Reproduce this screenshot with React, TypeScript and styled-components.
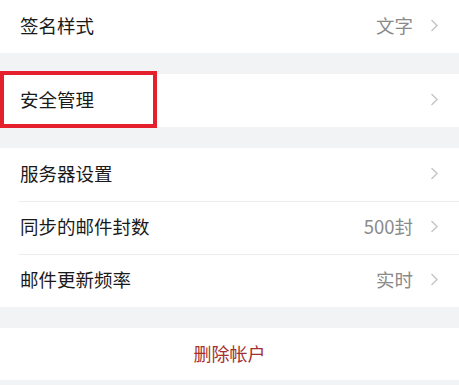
import styled, { createGlobalStyle } from "styled-components";

const GlobalStyle = createGlobalStyle`
  html, body {
    margin: 0;
    padding: 0;
    background: #f2f3f5;
    font-family: "Noto Sans CJK SC", "Noto Sans", sans-serif;
  }
`;

type Item = { label: string; value?: string };

const groups: Item[][] = [
  [{ label: "签名样式", value: "文字" }],
  [{ label: "安全管理" }],
  [
    { label: "服务器设置" },
    { label: "同步的邮件封数", value: "500封" },
    { label: "邮件更新频率", value: "实时" },
  ],
];

const Chevron = () => (
  <svg width="9" height="13" viewBox="0 0 9 13">
    <polyline
      points="1.5,1 7,6.5 1.5,12"
      fill="none"
      stroke="#c4c4c6"
      strokeWidth="1.4"
    />
  </svg>
);

const App = () => {
  return (
    <>
      <GlobalStyle />
      <Page>
        {groups.map((group, gi) => (
          <Group key={gi}>
            {group.map((item, i) => (
              <Row key={item.label} divided={i > 0}>
                <Label>{item.label}</Label>
                <Right>
                  {item.value && <Value>{item.value}</Value>}
                  <Chevron />
                </Right>
              </Row>
            ))}
            {gi === 1 && <Highlight />}
          </Group>
        ))}
        <Group>
          <DeleteRow>删除帐户</DeleteRow>
        </Group>
      </Page>
    </>
  );
};

export default App;

const Page = styled.div`
  display: flex;
  flex-direction: column;
  gap: 21px;
  padding-bottom: 6px;
`;

const Group = styled.div`
  position: relative;
  background: #ffffff;
  display: flex;
  flex-direction: column;
`;

const Row = styled.div<{ divided: boolean }>`
  position: relative;
  height: 53px;
  box-sizing: border-box;
  display: flex;
  align-items: center;
  justify-content: space-between;
  padding: 0 20px 3px;

  &::before {
    content: "";
    display: ${(p) => (p.divided ? "block" : "none")};
    position: absolute;
    top: 0;
    left: 19px;
    right: 0;
    height: 1px;
    background: #ececee;
  }
`;

const Label = styled.div`
  font-size: 18.5px;
  line-height: 1;
  color: #1a1a1a;
`;

const Right = styled.div`
  display: flex;
  align-items: center;
  gap: 17px;
`;

const Value = styled.div`
  font-size: 18.5px;
  line-height: 1;
  color: #8a8a8a;
`;

const DeleteRow = styled.div`
  height: 52px;
  box-sizing: border-box;
  padding-bottom: 3px;
  display: flex;
  align-items: center;
  justify-content: center;
  font-size: 18px;
  color: #a3302d;
`;

const Highlight = styled.div`
  position: absolute;
  left: 0;
  top: -3px;
  width: 157px;
  height: 57px;
  box-sizing: border-box;
  border: 4px solid #e3202b;
`;
